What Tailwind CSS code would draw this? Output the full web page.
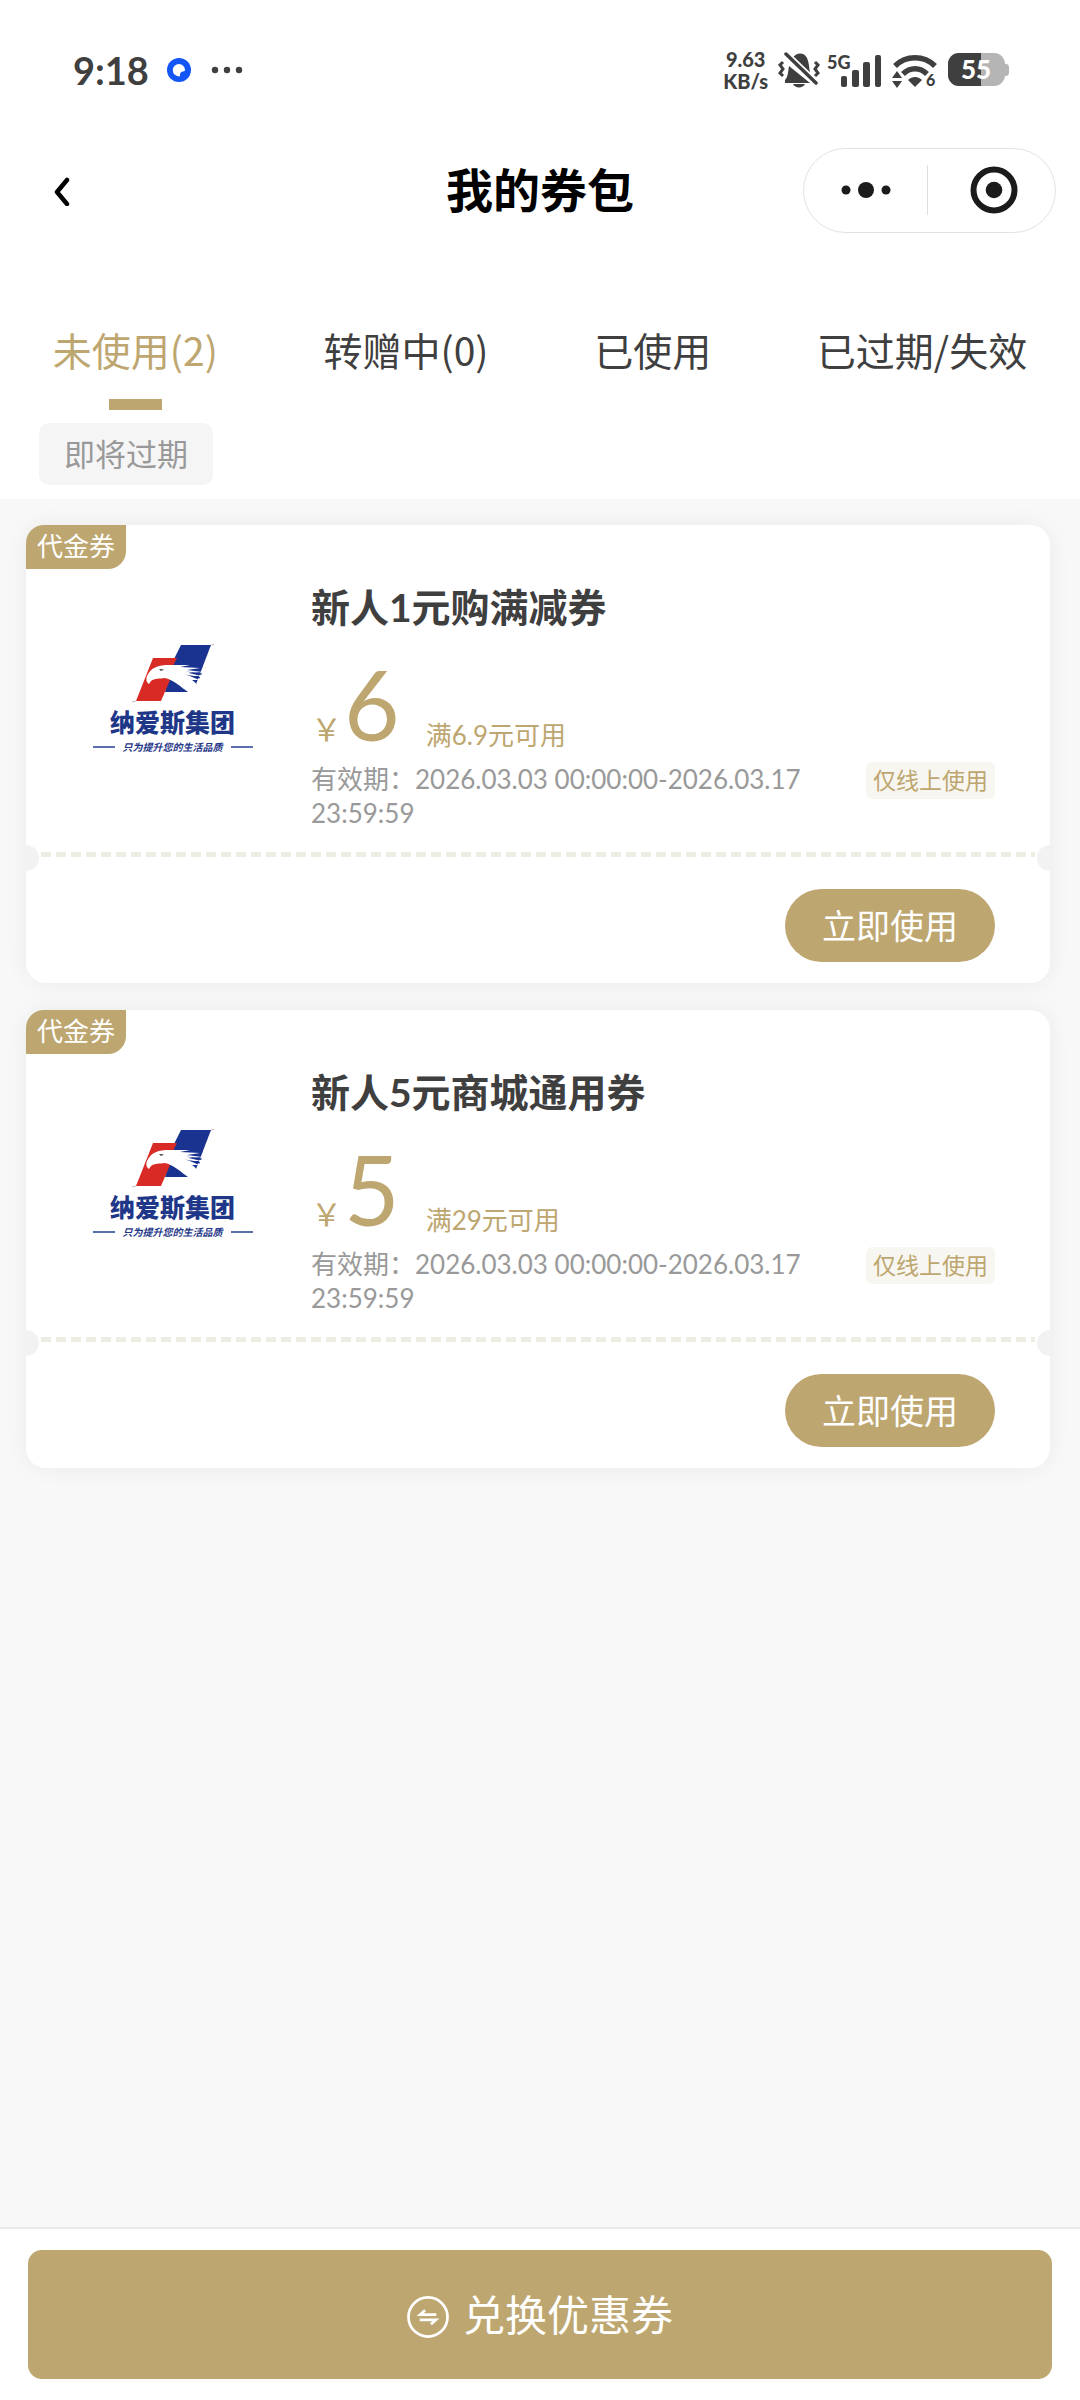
<!DOCTYPE html>
<html lang="zh-CN">
<head>
<meta charset="utf-8">
<meta name="viewport" content="width=device-width, initial-scale=1">
<title>我的券包</title>
<script src="https://cdn.jsdelivr.net/npm/@tailwindcss/browser@4"></script>
</head>
<body class="flex min-h-screen flex-col bg-[#f8f8f8] font-['Lato','Noto_Sans_CJK_SC',sans-serif] text-[#3f3f3f]">

<svg class="hidden" aria-hidden="true">
  <symbol id="eagle" viewBox="0 0 82 64">
    <path d="M49 2 L79 2 L61 49 L33 49 L40 20 Z" fill="#1a3290"/>
    <path d="M21 15 L45 15 L41 23 L38 37 L29 58 L4 58 Z" fill="#d92b26"/>
    <path d="M15 33 C19 24 27 22 37 22 L58 22 L48 24 L68 25 L55 27 L70 29 L57 30 L69 33 L58 33 L67 37 L60 37 C66 41 67 45 62 49 L56 49 C50 45 42 37 33 35 C27 36 23 35 19 38 L17 41 C14 39 14 36 15 33 Z" fill="#fff"/>
    <path d="M62 22 L71 22 L70 25 Z M54 28.500 L70 30.500 L69 32 Z M53 31.500 L68 34 L67.500 35.500 Z" fill="#1a3290"/>
    <path d="M27 26 L32 26.500 L29 28 Z" fill="#333"/>
    <path d="M79 2 L84 1 M4 58 L0 59" stroke="#c9b9b9" stroke-width="1"/>
  </symbol>
</svg>

<header class="bg-white">
  <div class="flex h-[140px] items-center justify-between pr-[71px] pl-[73px]">
    <div class="flex items-center">
      <span class="text-[38px] leading-[48px] font-bold">9:18</span>
      <svg class="ml-[18px] h-6 w-6" viewBox="0 0 24 24"><circle cx="12" cy="12" r="12" fill="#1456f5"/><path d="M12 6a6.200 6.200 0 1 0 0 12.400c.8 0 1-.6 1-1.500 0-2.200 1-3.300 3-3.500 1.300-.1 2-.4 2-1.400A6.100 6.100 0 0 0 12 6Z" fill="#fff"/></svg>
      <svg class="ml-5 h-2 w-8" viewBox="0 0 32 8"><g fill="#3f3f3f"><circle cx="4" cy="4" r="3.200"/><circle cx="16" cy="4" r="3.200"/><circle cx="28" cy="4" r="3.200"/></g></svg>
    </div>
    <div class="flex items-center">
      <div class="text-center text-[20px] leading-[22px] font-black"><div>9.63</div><div>KB/s</div></div>
      <svg class="ml-2.5 h-9 w-[42px]" viewBox="0 0 42 36" fill="none">
        <path d="M7 28c3-3 3-8 4-14L32 31H7Z" fill="#3f3f3f"/>
        <path d="M14 7c4-7 12-7 15-1 2 5 2 8 3 15Z" fill="#3f3f3f"/>
        <path d="M15 32h12c-2 4.500-10 4.500-12 0Z" fill="#3f3f3f"/>
        <path d="M8 2 38 31" stroke="#fff" stroke-width="7"/>
        <path d="M8 2 38 31" stroke="#3f3f3f" stroke-width="3.500" stroke-linecap="round"/>
        <path d="M5 10 2 13l3 4-3 4 3 3M37 10l3 3-3 4 3 4-3 3" stroke="#3f3f3f" stroke-width="3"/>
      </svg>
      <svg class="ml-[7px] h-10 w-[55px] overflow-visible" viewBox="0 -4 55 40">
        <text x="0" y="15" font-family="Lato" font-weight="900" font-size="18" fill="#3f3f3f">5G</text>
        <g fill="#3f3f3f"><rect x="14" y="22" width="6" height="11" rx="2"/><rect x="25" y="16" width="7" height="17" rx="2"/><rect x="36" y="8" width="7" height="25" rx="2"/><rect x="48" y="1" width="6" height="32" rx="2"/></g>
      </svg>
      <svg class="ml-2.5 h-10 w-[46px] overflow-visible" viewBox="0 0 46 40" fill="none">
        <path d="M3 16C14 5 32 5 43 16" stroke="#3f3f3f" stroke-width="5.500"/>
        <path d="M11 24c7-7 17-7 24 0" stroke="#3f3f3f" stroke-width="5.500"/>
        <path d="M16 30c4-4 10-4 14 0l-7 7Z" fill="#3f3f3f"/>
        <path d="M0 28 5 21l5 7ZM0 31l5 7 5-7Z" fill="#3f3f3f"/>
        <text x="34" y="36" font-family="Lato" font-weight="900" font-size="16" fill="#3f3f3f">6</text>
      </svg>
      <svg class="ml-2.5 h-[34px] w-[61px]" viewBox="0 0 61 34">
        <path d="M56 11h2q3 0 3 4v4q0 4-3 4h-2Z" fill="#b5b5b5"/>
        <rect width="57" height="33" rx="11" fill="#b5b5b5"/>
        <path d="M11 0h22v33H11A11 11 0 0 1 0 22V11A11 11 0 0 1 11 0Z" fill="#3f3f3f"/>
        <text x="28" y="26" text-anchor="middle" font-family="Lato" font-weight="900" font-size="26" fill="#fff">55</text>
      </svg>
    </div>
  </div>

  <div class="grid h-[100px] grid-cols-3 items-center pr-6 pl-[50px] text-black">
    <button type="button" aria-label="返回" class="h-12 w-12">
      <svg class="h-8 w-6" viewBox="0 0 24 32" fill="none"><path d="M17 6 7 18l10 12" stroke="#000" stroke-width="4.500" stroke-linecap="round" stroke-linejoin="round"/></svg>
    </button>
    <h1 class="-ml-[26px] text-center text-[47px] leading-[60px] font-bold">我的券包</h1>
    <div class="flex h-[85px] w-[253px] items-center justify-self-end rounded-full border border-[#e2e2e2]">
      <button type="button" aria-label="更多" class="flex flex-1 items-center justify-center">
        <svg class="h-4 w-[50px]" viewBox="0 0 50 16" fill="#1b1b1b"><circle cx="5" cy="8" r="4.500"/><circle cx="25" cy="8" r="8"/><circle cx="45" cy="8" r="4.500"/></svg>
      </button>
      <span class="h-[50px] w-px bg-[#dedede]"></span>
      <button type="button" aria-label="关闭" class="flex flex-1 items-center justify-center pl-1">
        <svg class="h-12 w-12" viewBox="0 0 48 48"><circle cx="24" cy="24" r="20.500" fill="none" stroke="#1b1b1b" stroke-width="6"/><circle cx="24" cy="24" r="8.300" fill="#1b1b1b"/></svg>
      </button>
    </div>
  </div>

  <nav class="mt-[80px] flex justify-around font-['Noto_Sans_CJK_SC',sans-serif] text-[39px] leading-[58px]">
    <a href="#unused" aria-current="page" class="flex flex-col items-center gap-[21px] text-[#bda66f]">未使用(2)<span class="h-[11px] w-[53px] bg-[#bda66f]"></span></a>
    <a href="#gifting">转赠中(0)</a>
    <a href="#used">已使用</a>
    <a href="#expired">已过期/失效</a>
  </nav>
  <div class="px-[39px] pt-[13px] pb-[14px]">
    <button type="button" class="block h-[62px] rounded-[10px] bg-[#f5f5f5] px-[25px] text-[31px] leading-[62px] text-[#999]">即将过期</button>
  </div>
</header>

<main class="flex flex-1 flex-col gap-[27px] pt-[26px] pr-[30px] pl-[26px]">
  <article class="relative rounded-[20px] bg-white pb-[21px] shadow-[0_0_24px_rgba(0,0,0,0.06)]">
    <span class="absolute top-0 left-0 h-11 rounded-tl-[18px] rounded-br-[18px] bg-[#bda66f] px-[11px] text-[26px] leading-[42px] text-white">代金券</span>
    <div class="flex h-[327px] pr-[55px]">
      <div class="flex w-[285px] flex-col items-center pt-[118px] pl-[8px] text-[#1f3788]">
        <svg class="h-[64px] w-[82px]" aria-hidden="true"><use href="#eagle"/></svg>
        <span class="text-[25px] leading-[30px] font-black">纳爱斯集团</span>
        <span class="flex items-center gap-[8px] text-[10px] leading-[20px] font-bold italic"><i class="h-[2px] w-[22px] bg-[#5c6fae]"></i>只为提升您的生活品质<i class="h-[2px] w-[22px] bg-[#5c6fae]"></i></span>
      </div>
      <div class="flex-1 pt-[58px]">
        <h2 class="text-[39px] leading-[48px] font-bold">新人1元购满减券</h2>
        <div class="mt-[25px] mb-[10px] flex h-24 items-baseline text-[#bda66f]">
          <span class="text-[31px] leading-[40px]">￥</span>
          <span class="ml-[2px] text-[96px] leading-[96px]">6</span>
          <span class="ml-[26px] self-end text-[26px] leading-[34px]">满6.9元可用</span>
        </div>
        <div class="flex items-start justify-between">
          <p class="flex-1 pr-6 text-[26px] leading-[34px] text-[#999]">有效期：2026.03.03 00:00:00-2026.03.17 23:59:59</p>
          <span class="shrink-0 rounded-md bg-[#f8f6f0] px-[7px] text-[23px] leading-[37px] text-[#bda66f]">仅线上使用</span>
        </div>
      </div>
    </div>
    <div class="mx-[15px] h-[5px] bg-[repeating-linear-gradient(90deg,#ededE4_0px,#ededE4_10px,transparent_10px,transparent_15px)]"></div>
    <span class="absolute top-[320px] -left-[13px] h-[26px] w-[26px] rounded-full bg-[#f2f2f2] [clip-path:inset(0_0_0_9px)]"></span>
    <span class="absolute top-[320px] -right-[13px] h-[26px] w-[26px] rounded-full bg-[#f2f2f2] [clip-path:inset(0_9px_0_0)]"></span>
    <div class="flex justify-end pt-8 pr-[55px]">
      <button type="button" class="h-[73px] rounded-full bg-[#bda66f] px-[37px] text-[34px] leading-[72px] text-white">立即使用</button>
    </div>
  </article>

  <article class="relative rounded-[20px] bg-white pb-[21px] shadow-[0_0_24px_rgba(0,0,0,0.06)]">
    <span class="absolute top-0 left-0 h-11 rounded-tl-[18px] rounded-br-[18px] bg-[#bda66f] px-[11px] text-[26px] leading-[42px] text-white">代金券</span>
    <div class="flex h-[327px] pr-[55px]">
      <div class="flex w-[285px] flex-col items-center pt-[118px] pl-[8px] text-[#1f3788]">
        <svg class="h-[64px] w-[82px]" aria-hidden="true"><use href="#eagle"/></svg>
        <span class="text-[25px] leading-[30px] font-black">纳爱斯集团</span>
        <span class="flex items-center gap-[8px] text-[10px] leading-[20px] font-bold italic"><i class="h-[2px] w-[22px] bg-[#5c6fae]"></i>只为提升您的生活品质<i class="h-[2px] w-[22px] bg-[#5c6fae]"></i></span>
      </div>
      <div class="flex-1 pt-[58px]">
        <h2 class="text-[39px] leading-[48px] font-bold">新人5元商城通用券</h2>
        <div class="mt-[25px] mb-[10px] flex h-24 items-baseline text-[#bda66f]">
          <span class="text-[31px] leading-[40px]">￥</span>
          <span class="ml-[2px] text-[96px] leading-[96px]">5</span>
          <span class="ml-[26px] self-end text-[26px] leading-[34px]">满29元可用</span>
        </div>
        <div class="flex items-start justify-between">
          <p class="flex-1 pr-6 text-[26px] leading-[34px] text-[#999]">有效期：2026.03.03 00:00:00-2026.03.17 23:59:59</p>
          <span class="shrink-0 rounded-md bg-[#f8f6f0] px-[7px] text-[23px] leading-[37px] text-[#bda66f]">仅线上使用</span>
        </div>
      </div>
    </div>
    <div class="mx-[15px] h-[5px] bg-[repeating-linear-gradient(90deg,#ededE4_0px,#ededE4_10px,transparent_10px,transparent_15px)]"></div>
    <span class="absolute top-[320px] -left-[13px] h-[26px] w-[26px] rounded-full bg-[#f2f2f2] [clip-path:inset(0_0_0_9px)]"></span>
    <span class="absolute top-[320px] -right-[13px] h-[26px] w-[26px] rounded-full bg-[#f2f2f2] [clip-path:inset(0_9px_0_0)]"></span>
    <div class="flex justify-end pt-8 pr-[55px]">
      <button type="button" class="h-[73px] rounded-full bg-[#bda66f] px-[37px] text-[34px] leading-[72px] text-white">立即使用</button>
    </div>
  </article>
</main>

<footer class="border-t-2 border-[#e9e9e9] bg-white px-7 pt-[21px] pb-[21px]">
  <button type="button" class="flex h-[129px] w-full items-center justify-center gap-[14px] rounded-[14px] bg-[#bda66f] text-[42px] leading-[60px] text-white">
    <svg class="mt-1 h-[42px] w-[42px]" viewBox="0 0 43 43" fill="none" stroke="#fff"><circle cx="21.500" cy="21.500" r="20" stroke-width="2.800"/><path d="M30 19H13.500l5-4.500M13 24.500h16.500l-5 4.500" stroke-width="2.800"/></svg>
    兑换优惠券
  </button>
</footer>
</body>
</html>
